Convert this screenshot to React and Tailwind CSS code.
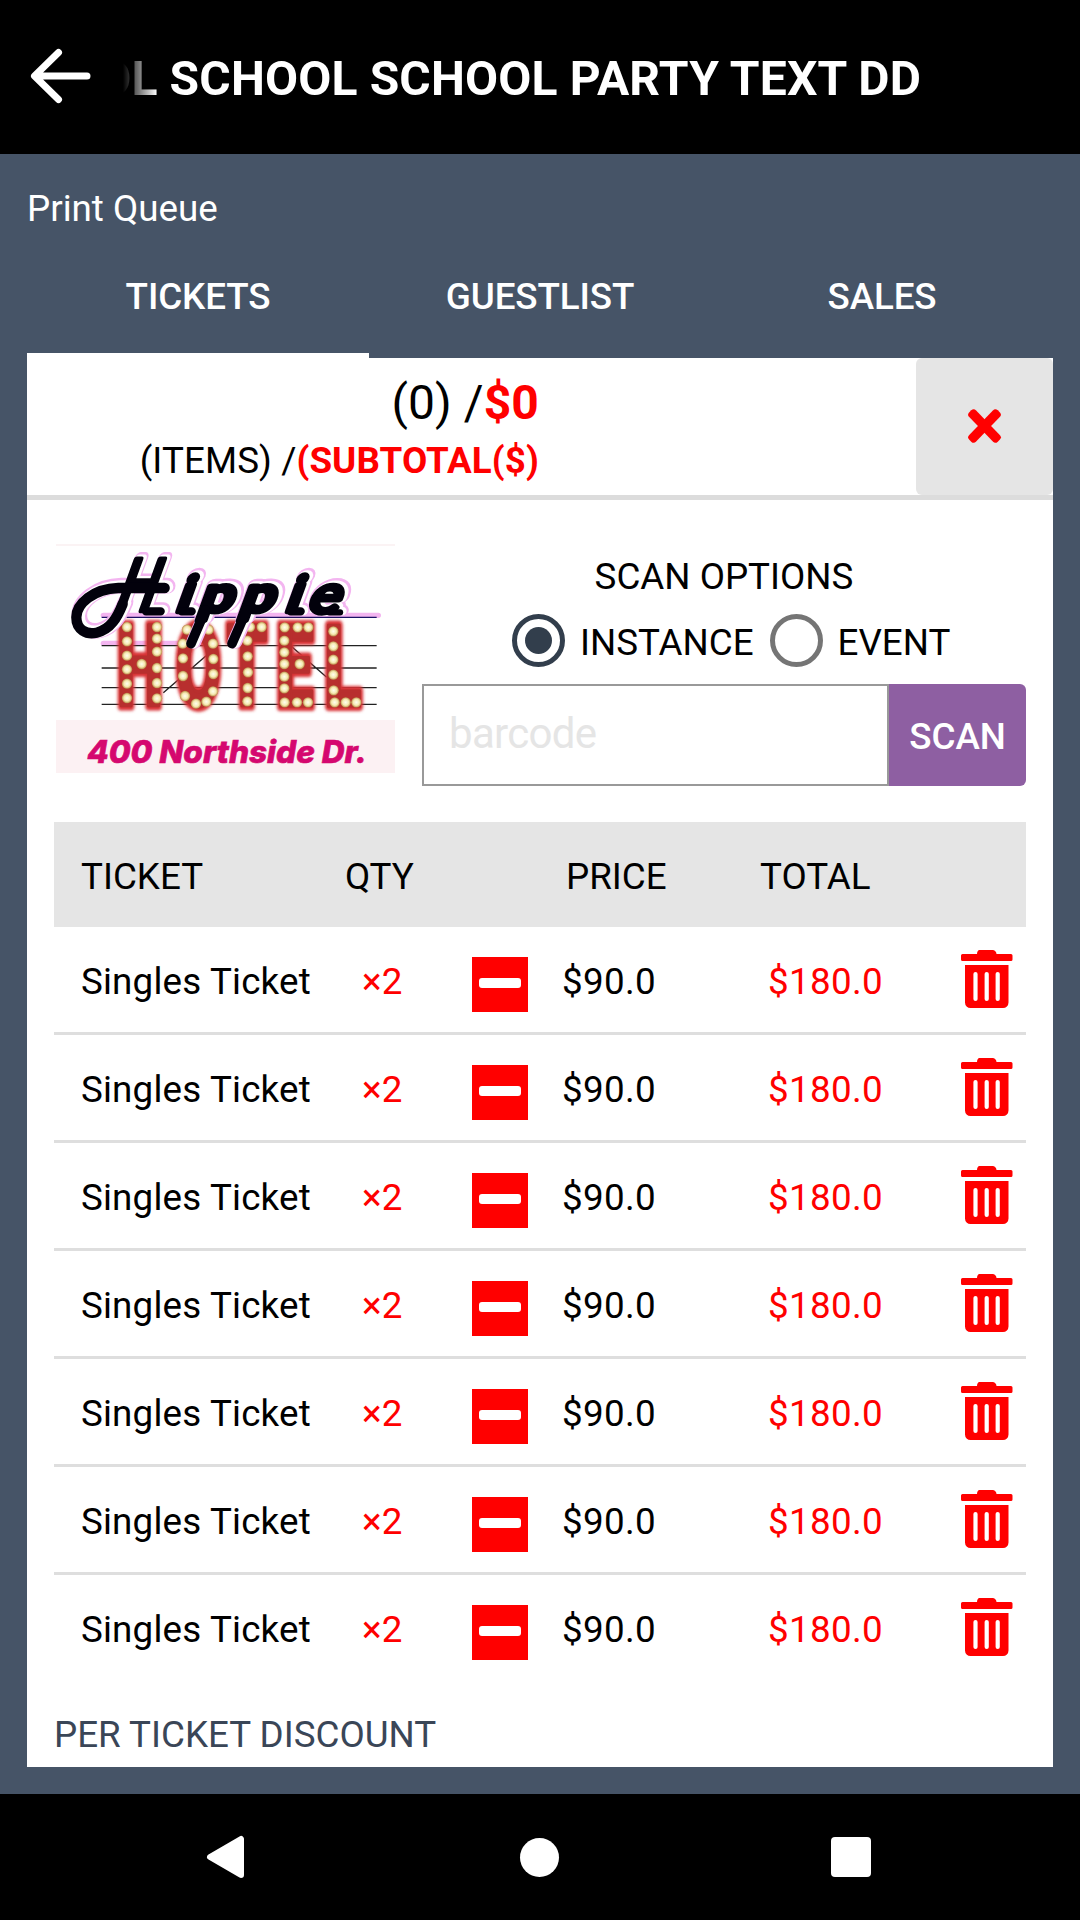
import React from "react";

const tickets = Array.from({ length: 7 }, (_, id) => ({
  id,
  name: "Singles Ticket",
  qty: 2,
  price: "$90.0",
  total: "$180.0",
}));

const tabs = ["TICKETS", "GUESTLIST", "SALES"];

function BackArrow() {
  return (
    <svg className="block" width="62" height="56" viewBox="0 0 62 56" fill="none" stroke="#fff" strokeWidth="7" strokeLinecap="round" strokeLinejoin="round">
      <path d="M57 28H5M28.500 4.500L4.500 28l24 23.500" />
    </svg>
  );
}

function CloseIcon() {
  return (
    <svg className="block" width="34" height="36" viewBox="0 0 34 36" fill="#ff0000">
      <g transform="translate(16.500 17)">
        <rect x="-20.500" y="-4.800" width="41" height="9.600" rx="3.500" transform="rotate(46)" />
        <rect x="-20.500" y="-4.800" width="41" height="9.600" rx="3.500" transform="rotate(-46)" />
      </g>
    </svg>
  );
}

function TrashIcon() {
  return (
    <svg className="block" width="52" height="58" viewBox="0 0 52 58">
      <path fill="#ff0000" d="M18.500 0h13c2.200 0 4 1.800 4 4H50a1.500 1.500 0 0 1 1.500 1.500V9.500A1.500 1.500 0 0 1 50 11H1.500A1.500 1.500 0 0 1 0 9.500V5.500A1.500 1.500 0 0 1 1.500 4H16c0-2.200 1-4 2.500-4z" />
      <path fill="#ff0000" d="M4 15h43.500v37.500a5.500 5.500 0 0 1-5.500 5.500H9.500A5.500 5.500 0 0 1 4 52.500z" />
      <g fill="#fff">
        <rect x="12.400" y="22" width="4.200" height="29" rx="2.100" />
        <rect x="23.600" y="22" width="4.200" height="29" rx="2.100" />
        <rect x="34.600" y="22" width="4.200" height="29" rx="2.100" />
      </g>
    </svg>
  );
}

// Script word: each letter has its own size and place on the slanted baseline.
const script = [
  { c: "H", x: 220, y: 240, s: 212, k: 0.74, w: 400 },
  { c: "i", x: 406, y: 243, s: 146, k: 1, w: 500 },
  { c: "p", x: 474, y: 243, s: 138, k: 1.26, w: 400 },
  { c: "p", x: 598, y: 243, s: 138, k: 1.26, w: 400 },
  { c: "i", x: 734, y: 243, s: 146, k: 1, w: 500 },
  { c: "e", x: 800, y: 246, s: 146, k: 1.2, w: 300 },
];

const marquee = [
  { c: "H", x: 231, k: 0.57 },
  { c: "O", x: 408, k: 0.57 },
  { c: "T", x: 560, k: 0.56 },
  { c: "E", x: 709, k: 0.58 },
  { c: "L", x: 853, k: 0.6 },
];

const bulbs = [
  [261, 291], [261, 334], [261, 377], [261, 418], [261, 461], [261, 504],
  [305, 402], [351, 291], [351, 326], [351, 365], [351, 414], [351, 459], [351, 505],
  [441, 299], [428, 341], [429, 385], [429, 438], [435, 498], [468, 521], [499, 515],
  [519, 484], [520, 432], [520, 387], [519, 341], [506, 299],
  [630, 291], [665, 291], [622, 332], [623, 379], [624, 427], [623, 474], [622, 514],
  [734, 292], [773, 292], [805, 292], [733, 332], [733, 367], [733, 402], [779, 402],
  [733, 440], [733, 475], [734, 517], [771, 517], [804, 517],
  [880, 304], [880, 349], [880, 389], [880, 434], [881, 481], [884, 517], [917, 517], [949, 517],
];

function ScriptLayer({ color, width, dx, dy }) {
  return (
    <g fill={color} stroke={color} strokeWidth={width} strokeLinejoin="round" strokeLinecap="round" transform={`translate(${dx} ${dy})`} fontFamily="Roboto, sans-serif">
      {script.map((l, i) => (
        <text key={i} transform={`translate(${l.x} ${l.y}) skewX(-20) scale(${l.k} 1)`} fontSize={l.s} fontWeight={l.w}>{l.c}</text>
      ))}
      <path fill="none" strokeWidth={width + 12} d="M374 174H235C160 176 109 222 109 262C109 300 140 315 170 308C212 298 232 262 248 222" />
      <path fill="none" strokeWidth={width + 10} d="M496 240L453 341M620 240L576 341" />
      <path fill="none" strokeWidth={width + 6} d="M318 244h44M425 244h30M752 244h30" />
      <path fill="none" strokeWidth={width} d="M868 247h32" />
    </g>
  );
}

function HippieHotelLogo() {
  return (
    <svg className="block overflow-visible" width="339" height="229" viewBox="48 42 1017 687" preserveAspectRatio="none">
      <defs>
        <filter id="glow" x="-10%" y="-10%" width="120%" height="120%">
          <feGaussianBlur stdDeviation="5" />
        </filter>
        <radialGradient id="bulb">
          <stop offset="0" stopColor="#fffef0" />
          <stop offset="0.6" stopColor="#f5e9b0" />
          <stop offset="1" stopColor="#b98a48" />
        </radialGradient>
      </defs>
      <rect x="48" y="42" width="1017" height="687" fill="#fff" />
      <rect x="48" y="42" width="1017" height="6" fill="#fbf3f4" />
      <rect x="48" y="570" width="1017" height="159" fill="#fcf1f3" />
      <path d="M190 256H1015M190 340H420" stroke="#f3b5f0" strokeWidth="16" strokeLinecap="round" />
      <path d="M185 262H1010" stroke="#1c1266" strokeWidth="4" />
      <path d="M185 347H1010M185 414H1010M185 473H1010M185 523H1010M370 488L500 376M752 347L860 442" stroke="#222" strokeWidth="4" />
      {[0, 1].map((layer) => (
        <g key={layer} fill={layer ? "#b82f2e" : "#d83236"} stroke={layer ? "#b82f2e" : "#d83236"} strokeWidth={layer ? 10 : 30} strokeLinejoin="round" filter={layer ? undefined : "url(#glow)"} fontFamily="Roboto, sans-serif" fontWeight="900" fontSize="342">
          {marquee.map((l) => (
            <text key={l.c} transform={`translate(${l.x} 529) scale(${l.k} 1)`}>{l.c}</text>
          ))}
        </g>
      ))}
      {bulbs.map(([x, y], i) => (
        <circle key={i} cx={x} cy={y} r="15.500" fill="url(#bulb)" />
      ))}
      <ScriptLayer color="#f3b5f0" width={35} dx={9} dy={-7} />
      <ScriptLayer color="#ffffff" width={26} dx={7} dy={-4} />
      <ScriptLayer color="#02010c" width={19} dx={0} dy={0} />
      <text x="141" y="699" fontFamily="Inter, sans-serif" fontWeight="800" fontStyle="italic" fontSize="94" fill="#d5086f" stroke="#d5086f" strokeWidth="2" textLength="840" lengthAdjust="spacingAndGlyphs">400 Northside Dr.</text>
    </svg>
  );
}

function Radio({ label, checked }) {
  return (
    <div className="flex items-start">
      <span className={`flex size-[53px] items-center justify-center rounded-full border-[5px] ${checked ? "border-[#323e4c]" : "border-[#757575]"}`}>
        {checked && <span className="size-[27px] rounded-full bg-[#323e4c]" />}
      </span>
      <span className="ml-[15px] pt-[2px] leading-[54px]">{label}</span>
    </div>
  );
}

export default function App() {
  return (
    <div className="flex h-[1920px] w-[1080px] flex-col overflow-hidden bg-[#465467] font-['Roboto',sans-serif] text-[36.75px] text-black">
      <header className="flex h-[154px] shrink-0 bg-black text-white">
        <div className="w-[123px] pt-[48px] pl-[30px]">
          <BackArrow />
        </div>
        <h1 className="flex w-[798px] justify-end overflow-hidden text-[48px] leading-[158px] font-bold tracking-[0.16px] whitespace-nowrap mask-[linear-gradient(to_right,transparent,black_34px)]">
          OL SCHOOL SCHOOL PARTY TEXT DD
        </h1>
      </header>

      <div className="h-[109px] shrink-0 pl-[27px] leading-[109px] text-white">Print Queue</div>

      <nav className="mx-[27px] grid h-[95px] shrink-0 grid-cols-3 text-center font-medium text-white">
        {tabs.map((tab, i) => (
          <div key={tab} className={`leading-[67px] tracking-[-0.1px] ${i === 0 ? "border-b-[5px] border-white" : ""}`}>{tab}</div>
        ))}
      </nav>

      <main className="mx-[27px] h-[1409px] shrink-0 overflow-hidden bg-white">
        <section className="flex h-[142px] border-b-[5px] border-[#dcdcdc]">
          <div className="w-[512px] pt-[12px] text-right whitespace-nowrap">
            <div className="text-[48px] leading-[66px] tracking-[0.1px]">(0) /<b className="font-bold text-[#ff0000]">$0</b></div>
            <div className="leading-[50px] tracking-[0.1px]">(ITEMS) /<b className="font-bold text-[#ff0000]">(SUBTOTAL($)</b></div>
          </div>
          <button className="ml-auto flex w-[137px] items-center justify-center rounded-[6px] bg-[#e5e5e5]">
            <CloseIcon />
          </button>
        </section>

        <section className="flex h-[322px] pt-[44px] pl-[29px]">
          <HippieHotelLogo />
          <div className="ml-[27px] flex w-[604px] flex-col">
            <div className="h-[70px] pt-[8px] text-center leading-[50px]">SCAN OPTIONS</div>
            <div className="flex h-[70px] items-start gap-[16px] pl-[90px]">
              <Radio label="INSTANCE" checked />
              <Radio label="EVENT" />
            </div>
            <div className="flex h-[102px]">
              <div className="w-[467px] border-2 border-[#999] pl-[25px] text-[42px] leading-[95px] tracking-[-0.7px] text-[#e5e5e5]">barcode</div>
              <button className="flex-1 rounded-r-[6px] bg-[#8e5fa2] pt-[3px] font-medium text-white">SCAN</button>
            </div>
          </div>
        </section>

        <section className="mx-[27px]">
          <div className="flex h-[105px] bg-[#e5e5e5] leading-[110px]">
            <div className="w-[291px] pl-[27px]">TICKET</div>
            <div className="w-[221px]">QTY</div>
            <div className="w-[194px]">PRICE</div>
            <div>TOTAL</div>
          </div>
          {tickets.map((t, i) => (
            <div key={t.id} className={`flex h-[108px] border-b-[3px] leading-[110px] tracking-[0.18px] whitespace-nowrap ${i < tickets.length - 1 ? "border-[#dedede]" : "border-transparent"}`}>
              <div className="w-[308px] pl-[27px]">{t.name}</div>
              <div className="w-[110px] text-[#ff0000]">×{t.qty}</div>
              <div className="mt-[30px] flex h-[55px] w-[56px] justify-center bg-[#ff0000] pt-[21px]">
                <span className="h-[10px] w-[42px] rounded-[3px] bg-white" />
              </div>
              <div className="ml-[34px] w-[206px] tracking-[0.35px]">{t.price}</div>
              <div className="w-[192.500px] tracking-[0.35px] text-[#ff0000]">{t.total}</div>
              <div className="pt-[23px]"><TrashIcon /></div>
            </div>
          ))}
          <div className="pt-[27px] leading-[50px] text-[#3a4657]">PER TICKET DISCOUNT</div>
        </section>
      </main>

      <footer className="mt-[27px] flex h-[126px] shrink-0 bg-black pt-[41px]">
        <svg className="ml-[206px] block" width="40" height="44" viewBox="0 0 40 44">
          <path d="M35 4v36L4 22z" fill="#fff" stroke="#fff" strokeWidth="6" strokeLinejoin="round" />
        </svg>
        <span className="mt-[3px] ml-[274px] block size-[39px] rounded-full bg-white" />
        <span className="mt-[2px] ml-[272px] block size-[40px] rounded-[4px] bg-white" />
      </footer>
    </div>
  );
}
